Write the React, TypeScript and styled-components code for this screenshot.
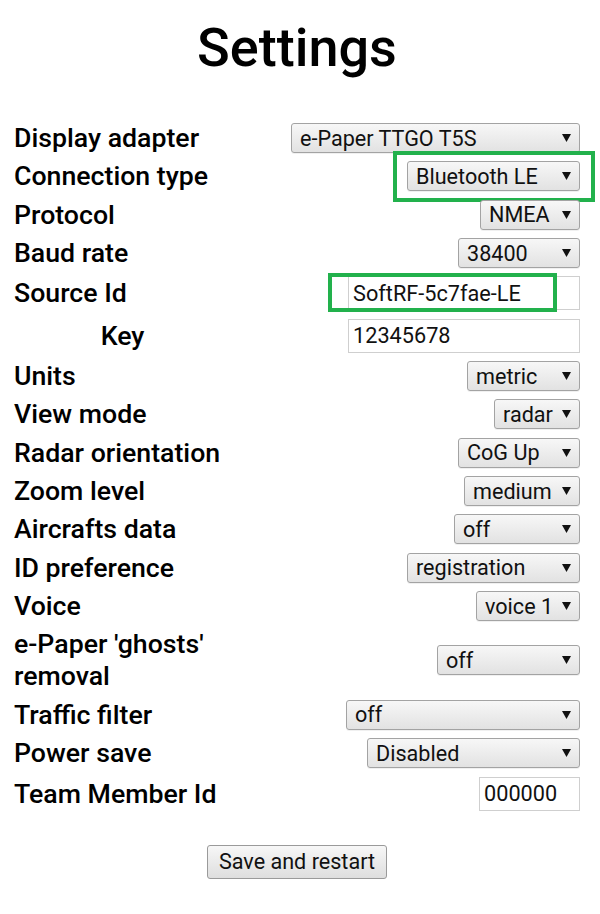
import React from 'react';
import styled, { createGlobalStyle } from 'styled-components';

const GlobalStyle = createGlobalStyle`
  html, body {
    margin: 0;
    padding: 0;
    background: #ffffff;
  }
  body {
    font-family: Roboto, "Noto Sans", "Liberation Sans", sans-serif;
    color: #000;
  }
`;

const Page = styled.div`
  width: 600px;
  box-sizing: border-box;
  padding: 0 20px 30px 14px;
`;

const Title = styled.h1`
  margin: 0;
  padding-top: 16px;
  height: 123px;
  box-sizing: border-box;
  text-align: center;
  font-size: 54px;
  font-weight: 500;
  line-height: 64px;
`;

const Form = styled.div`
  display: flex;
  flex-direction: column;
  gap: 8.35px;
`;

const Row = styled.div`
  display: flex;
  align-items: center;
  justify-content: space-between;
`;

const Label = styled.div<{ $center?: boolean }>`
  width: 217px;
  flex-shrink: 0;
  margin: -1px 0;
  font-size: 26.7px;
  font-weight: 500;
  line-height: 32px;
  text-align: ${(p) => (p.$center ? 'center' : 'left')};
`;

const Control = styled.div`
  position: relative;
  display: flex;
`;

// green marker frame drawn over a control
const Highlight = styled.div<{ $l: number; $r: number; $t: number; $b: number }>`
  position: absolute;
  left: ${(p) => p.$l}px;
  right: ${(p) => p.$r}px;
  top: ${(p) => p.$t}px;
  bottom: ${(p) => p.$b}px;
  border: 4px solid #22b14c;
  pointer-events: none;
`;

const SelectBox = styled.select<{ $width: number }>`
  appearance: none;
  -webkit-appearance: none;
  width: ${(p) => p.$width}px;
  height: 30px;
  box-sizing: border-box;
  margin: 0;
  padding: 0 24px 0 8px;
  font-family: Roboto, "Noto Sans", sans-serif;
  font-size: 21.6px;
  color: #111;
  border: 1px solid #a3a3a3;
  border-radius: 3px;
  background: linear-gradient(#f7f7f7, #e2e2e2);
  box-shadow: 0 1px 0 rgba(0, 0, 0, 0.06);
  outline: none;
`;

const Arrow = styled.svg`
  position: absolute;
  right: 9px;
  top: 11px;
  width: 9px;
  height: 8px;
  pointer-events: none;
`;

const TextInput = styled.input<{ $width: number }>`
  width: ${(p) => p.$width}px;
  height: 34px;
  box-sizing: border-box;
  margin: 0;
  padding: 0 4px;
  font-family: Roboto, "Noto Sans", sans-serif;
  font-size: 21.7px;
  color: #111;
  border: 1px solid #cfcfcf;
  border-radius: 0;
  background: #fff;
  outline: none;
`;

const ButtonRow = styled.div`
  display: flex;
  justify-content: center;
  margin-top: 34px;
`;

const Button = styled.button`
  width: 180px;
  height: 34px;
  margin: 0;
  padding: 0;
  font-family: Roboto, "Noto Sans", sans-serif;
  font-size: 21.6px;
  color: #111;
  border: 1px solid #9a9a9a;
  border-radius: 3px;
  background: linear-gradient(#f7f7f7, #dedede);
  cursor: pointer;
`;

type Frame = { l: number; r: number; t: number; b: number };

type Field =
  | { kind: 'select'; label: string; value: string; width: number; frame?: Frame }
  | { kind: 'input'; label: string; value: string; width: number; center?: boolean; frame?: Frame };

const fields: Field[] = [
  { kind: 'select', label: 'Display adapter', value: 'e-Paper TTGO T5S', width: 289 },
  { kind: 'select', label: 'Connection type', value: 'Bluetooth LE', width: 173, frame: { l: -14, r: -15, t: -10, b: -11 } },
  { kind: 'select', label: 'Protocol', value: 'NMEA', width: 100 },
  { kind: 'select', label: 'Baud rate', value: '38400', width: 122 },
  { kind: 'input', label: 'Source Id', value: 'SoftRF-5c7fae-LE', width: 232, frame: { l: -20, r: 23, t: -3, b: -2 } },
  { kind: 'input', label: 'Key', value: '12345678', width: 232, center: true },
  { kind: 'select', label: 'Units', value: 'metric', width: 113 },
  { kind: 'select', label: 'View mode', value: 'radar', width: 86 },
  { kind: 'select', label: 'Radar orientation', value: 'CoG Up', width: 122 },
  { kind: 'select', label: 'Zoom level', value: 'medium', width: 116 },
  { kind: 'select', label: 'Aircrafts data', value: 'off', width: 126 },
  { kind: 'select', label: 'ID preference', value: 'registration', width: 173 },
  { kind: 'select', label: 'Voice', value: 'voice 1', width: 104 },
  { kind: 'select', label: "e-Paper 'ghosts' removal", value: 'off', width: 143 },
  { kind: 'select', label: 'Traffic filter', value: 'off', width: 234 },
  { kind: 'select', label: 'Power save', value: 'Disabled', width: 213 },
  { kind: 'input', label: 'Team Member Id', value: '000000', width: 101 },
];

const App: React.FC = () => {
  return (
    <Page>
      <GlobalStyle />
      <Title>Settings</Title>
      <Form>
        {fields.map((f) => (
          <Row key={f.label}>
            <Label $center={f.kind === 'input' && f.center}>{f.label}</Label>
            <Control>
              {f.kind === 'select' ? (
                <>
                  <SelectBox $width={f.width} defaultValue={f.value}>
                    <option value={f.value}>{f.value}</option>
                  </SelectBox>
                  <Arrow viewBox="0 0 9 8">
                    <polygon points="0,0 9,0 4.5,8" fill="#111" />
                  </Arrow>
                </>
              ) : (
                <TextInput $width={f.width} defaultValue={f.value} />
              )}
              {f.frame && <Highlight $l={f.frame.l} $r={f.frame.r} $t={f.frame.t} $b={f.frame.b} />}
            </Control>
          </Row>
        ))}
      </Form>
      <ButtonRow>
        <Button>Save and restart</Button>
      </ButtonRow>
    </Page>
  );
};

export default App;
